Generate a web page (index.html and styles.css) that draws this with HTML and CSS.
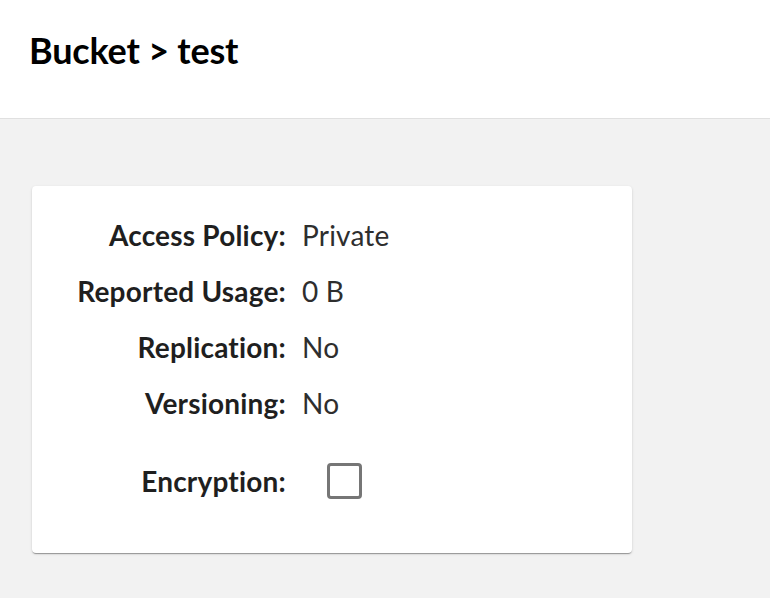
FILE: index.html
```html
<!DOCTYPE html>
<html>
<head>
<meta charset="utf-8">
<link rel="stylesheet" href="styles.css">
</head>
<body>
<header class="page-header">
  <h1 class="title">Bucket &gt; test</h1>
</header>
<main class="content">
  <section class="card">
    <div class="info-grid">
      <div class="label">Access Policy:</div><div class="value">Private</div>
      <div class="label">Reported Usage:</div><div class="value">0 B</div>
      <div class="label">Replication:</div><div class="value">No</div>
      <div class="label">Versioning:</div><div class="value">No</div>
      <div class="label">Encryption:</div><div class="value"><span class="checkbox"></span></div>
    </div>
  </section>
</main>
</body>
</html>
```
FILE: styles.css
```css
html, body {
  margin: 0;
  padding: 0;
}
body {
  background: #f2f2f2;
  font-family: Lato, "Noto Sans", sans-serif;
  width: 770px;
  height: 598px;
  overflow: hidden;
}
.page-header {
  background: #fff;
  height: 118px;
  border-bottom: 1px solid #e0e0e0;
  display: flex;
  align-items: flex-start;
}
.title {
  margin: 0;
  padding: 29px 0 0 29px;
  font-size: 36px;
  font-weight: 700;
  color: #000;
  line-height: 42px;
  letter-spacing: -0.2px;
}
.content {
  padding: 67px 0 0 32px;
}
.card {
  width: 600px;
  height: 367px;
  box-sizing: border-box;
  background: #fff;
  border-radius: 4px;
  box-shadow: 0 2px 1px -1px rgba(0,0,0,0.22), 0 1px 1px 0 rgba(0,0,0,0.14), 0 1px 3px 0 rgba(0,0,0,0.12);
  padding-top: 21px;
}
.info-grid {
  display: grid;
  grid-template-columns: 254px 1fr;
  grid-template-rows: repeat(4, 56px) 100px;
  column-gap: 16px;
  align-items: center;
  font-size: 28px;
  letter-spacing: 0.2px;
}
.label {
  text-align: right;
  font-weight: 700;
  color: #1f1f1f;
}
.value {
  color: #2e2e2e;
  display: flex;
  align-items: center;
}
.checkbox {
  display: block;
  width: 35px;
  height: 36px;
  box-sizing: border-box;
  border: 3px solid #767676;
  border-radius: 4px;
  margin-left: 25px;
}
```
